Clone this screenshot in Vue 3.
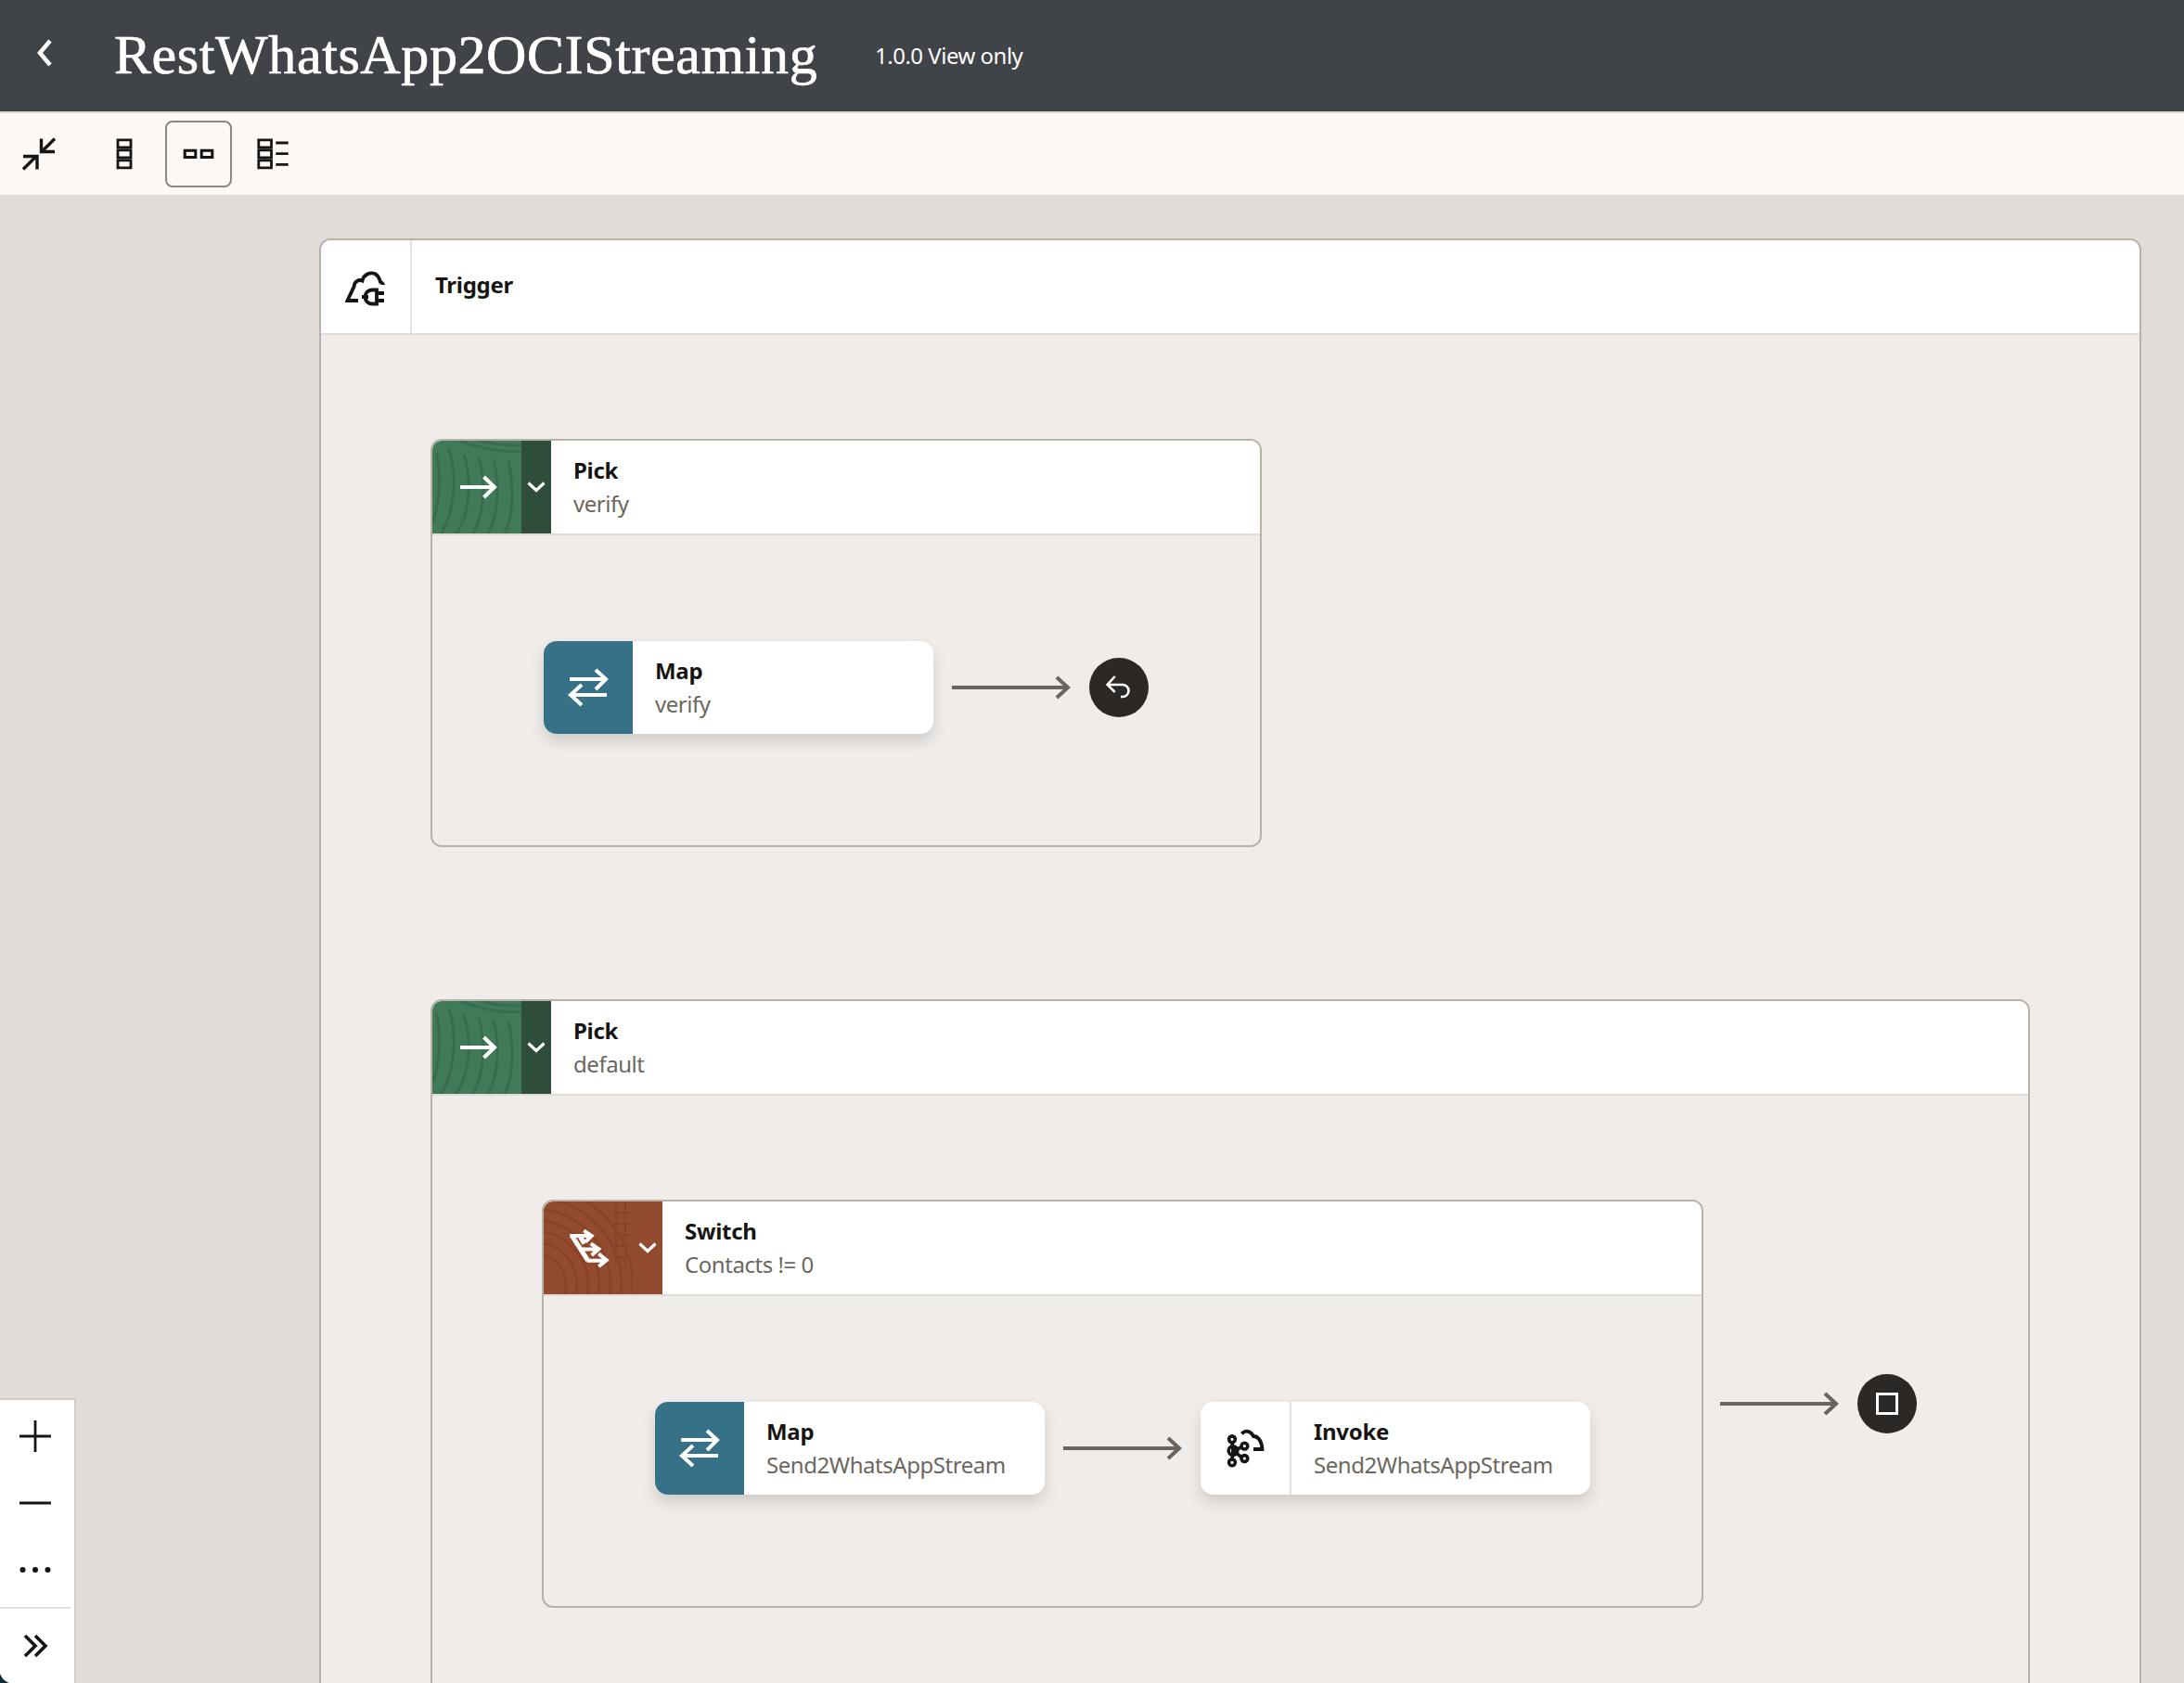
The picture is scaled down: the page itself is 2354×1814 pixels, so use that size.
<script setup>
const greenGrain = [
  'M30 0C50 8 75 12 96 12',
  'M52 0C65 4 85 5 96 5',
  'M4 12C10 35 8 70 0 88',
  'M18 8C26 35 26 70 10 100',
  'M34 15C42 40 42 75 26 100',
  'M50 18C58 45 56 78 44 100',
  'M66 20C72 45 72 80 60 100',
  'M82 22C88 48 88 80 78 100'
]
const rustGrain = [34, 46, 58, 70, 82, 94, 106]
const rustTicks = [
  'M78 0V66', 'M88 0V72', 'M74 12H96', 'M74 24H96', 'M76 36H96', 'M76 48H96', 'M76 60H96'
]
</script>

<template>
  <div class="page">
    <header class="topbar">
      <svg class="back" width="20" height="32" viewBox="0 0 20 32"><path d="M15 3 4 16l11 13" fill="none" stroke="#fff" stroke-width="4.500"/></svg>
      <h1 class="title">RestWhatsApp2OCIStreaming</h1>
      <span class="version">1.0.0 View only</span>
    </header>

    <nav class="toolbar">
      <button class="tool first">
        <svg width="36" height="36" viewBox="0 0 36 36" fill="none" stroke="#161513" stroke-width="3.400"><path d="M35 1.500 21 15.500M20.500 1.500v14H35M1 34.500l14.500-14.500M1 20.500h15v14"/></svg>
      </button>
      <button class="tool">
        <svg width="36" height="36" viewBox="0 0 36 36" fill="none" stroke="#161513" stroke-width="2.800"><path d="M11 2.800h14v8H11zM11 13.800h14v8H11zM11 24.800h14v8H11z"/></svg>
      </button>
      <button class="tool active">
        <svg width="36" height="36" viewBox="0 0 36 36" fill="none" stroke="#161513" stroke-width="3"><path d="M3.200 14.200h11.600v7.400H3.200zM21.200 14.200h11.600v7.400H21.200z"/></svg>
      </button>
      <button class="tool">
        <svg width="36" height="36" viewBox="0 0 36 36" fill="none" stroke="#161513" stroke-width="2.800"><path d="M2.800 2.800h13.700v8H2.800zM2.800 13.800h13.700v8H2.800zM2.800 24.800h13.700v8H2.800zM21.300 6h13.400M21.300 17.700h13.400M21.300 29.300h13.400"/></svg>
      </button>
    </nav>

    <main class="canvas">
      <section class="scope trigger">
        <div class="scope-head">
          <div class="trigger-icon">
            <svg width="44" height="38" viewBox="0 0 44 38" fill="none" stroke="#161513" stroke-width="3.800"><path d="M14 32H2.500L9.500 17C10 11 15 9 18.500 10.500 20 4 27 1 32 3c4 2 5 5 6 9 2 1 3 2 3 3"/><path d="M18 28h7M34 20.500h-5a7.500 7.500 0 0 0 0 15h5zM34 24h8M34 32h8"/></svg>
          </div>
          <div class="head-text"><span class="name">Trigger</span></div>
        </div>
        <div class="trigger-body">
          <section class="scope pick-verify">
            <div class="scope-head">
              <div class="grain green">
                <svg class="grain-art" width="96" height="100" viewBox="0 0 96 100" fill="none" stroke="#396c4f" stroke-width="3"><path v-for="d in greenGrain" :key="d" :d="d"/></svg>
                <svg class="grain-icon" width="48" height="48" viewBox="0 0 48 48" fill="none" stroke="#fff" stroke-width="4"><path d="M6 24h37M31.500 13 43 24 31.500 35"/></svg>
              </div>
              <div class="chev dark-green">
                <svg width="20" height="12" viewBox="0 0 20 12" fill="none" stroke="#fff" stroke-width="3.200"><path d="m1.500 1.500 8.500 8 8.500-8"/></svg>
              </div>
              <div class="head-text"><span class="name">Pick</span><span class="sub">verify</span></div>
            </div>
            <div class="scope-body row">
              <article class="node">
                <div class="node-icon teal">
                  <svg width="48" height="48" viewBox="0 0 48 48" fill="none" stroke="#fff" stroke-width="4"><path d="M4 15h39M32 5l11 10-11 11M44 32H5M17 21 5 32l12 11"/></svg>
                </div>
                <div class="head-text"><span class="name">Map</span><span class="sub">verify</span></div>
              </article>
              <svg class="link" width="128" height="26" viewBox="0 0 128 26" fill="none" stroke="#6b645e" stroke-width="4"><path d="M0 13h125M113 2l12 11-12 11"/></svg>
              <div class="end">
                <svg width="32" height="32" viewBox="0 0 32 32" fill="none" stroke="#fff" stroke-width="2.600"><path d="M11.700 4 3.600 13l8.100 8M4 13h16a6.500 6.500 0 0 1 0 13h-2"/></svg>
              </div>
            </div>
          </section>

          <section class="scope pick-default">
            <div class="scope-head">
              <div class="grain green">
                <svg class="grain-art" width="96" height="100" viewBox="0 0 96 100" fill="none" stroke="#396c4f" stroke-width="3"><path v-for="d in greenGrain" :key="d" :d="d"/></svg>
                <svg class="grain-icon" width="48" height="48" viewBox="0 0 48 48" fill="none" stroke="#fff" stroke-width="4"><path d="M6 24h37M31.500 13 43 24 31.500 35"/></svg>
              </div>
              <div class="chev dark-green">
                <svg width="20" height="12" viewBox="0 0 20 12" fill="none" stroke="#fff" stroke-width="3.200"><path d="m1.500 1.500 8.500 8 8.500-8"/></svg>
              </div>
              <div class="head-text"><span class="name">Pick</span><span class="sub">default</span></div>
            </div>
            <div class="default-body">
              <section class="scope switch">
                <div class="scope-head">
                  <div class="grain rust">
                    <svg class="grain-art" width="96" height="100" viewBox="0 0 96 100" fill="none" stroke="#85432a" stroke-width="2.600">
                      <circle v-for="r in rustGrain" :key="r" cx="-10" cy="90" :r="r"/>
                      <path v-for="d in rustTicks" :key="d" :d="d" stroke-width="2"/>
                    </svg>
                    <svg class="grain-icon" width="48" height="48" viewBox="0 0 48 48" fill="none" stroke="#fff" stroke-width="4"><path d="M4.300 11H26M19.300 5.300 27.700 11 21 17.700M16 25.500h18.300M26.700 19.300l8.600 6L27.700 32M22.700 37.700h20M35.300 30.300l8.400 7-8.400 6.700"/><path d="M6.500 11l17.200 26.700M15.300 12 20 19.300" stroke-width="5"/></svg>
                  </div>
                  <div class="chev rust-flat">
                    <svg width="20" height="12" viewBox="0 0 20 12" fill="none" stroke="#fff" stroke-width="3.200"><path d="m1.500 1.500 8.500 8 8.500-8"/></svg>
                  </div>
                  <div class="head-text"><span class="name">Switch</span><span class="sub">Contacts != 0</span></div>
                </div>
                <div class="scope-body row">
                  <article class="node">
                    <div class="node-icon teal">
                      <svg width="48" height="48" viewBox="0 0 48 48" fill="none" stroke="#fff" stroke-width="4"><path d="M4 15h39M32 5l11 10-11 11M44 32H5M17 21 5 32l12 11"/></svg>
                    </div>
                    <div class="head-text"><span class="name">Map</span><span class="sub">Send2WhatsAppStream</span></div>
                  </article>
                  <svg class="link" width="128" height="26" viewBox="0 0 128 26" fill="none" stroke="#6b645e" stroke-width="4"><path d="M0 13h125M113 2l12 11-12 11"/></svg>
                  <article class="node">
                    <div class="node-icon plain">
                      <svg width="48" height="48" viewBox="0 0 48 48" fill="none" stroke="#161513" stroke-width="3.600"><path d="M20.500 8.500C24 4 30 5 33 11c5 0 9 5 9.500 14H33" stroke-width="3.800"/><path d="M10 17.500 11 26.500M10 36 11 26.500M20 23l-9 3.500M20 33.500l-9-7"/><circle cx="10" cy="14.300" r="3.400"/><circle cx="10" cy="39.300" r="3.400"/><circle cx="23.400" cy="21.600" r="3.400"/><circle cx="23.400" cy="35" r="3.400"/><circle cx="11" cy="26.600" r="4.800"/></svg>
                    </div>
                    <div class="head-text"><span class="name">Invoke</span><span class="sub">Send2WhatsAppStream</span></div>
                  </article>
                </div>
              </section>
              <svg class="link after-switch" width="128" height="26" viewBox="0 0 128 26" fill="none" stroke="#6b645e" stroke-width="4"><path d="M0 13h125M113 2l12 11-12 11"/></svg>
              <div class="end">
                <span class="stop"></span>
              </div>
            </div>
          </section>
        </div>
      </section>

      <aside class="zoom-panel">
        <button class="zoom-btn">
          <svg width="36" height="36" viewBox="0 0 36 36" fill="none" stroke="#161513" stroke-width="2.800"><path d="M1 18h34M18 1v34"/></svg>
        </button>
        <button class="zoom-btn">
          <svg width="36" height="36" viewBox="0 0 36 36" fill="none" stroke="#161513" stroke-width="2.800"><path d="M1 18h34"/></svg>
        </button>
        <button class="zoom-btn">
          <svg width="36" height="36" viewBox="0 0 36 36" fill="#161513"><circle cx="4.500" cy="18" r="3"/><circle cx="18" cy="18" r="3"/><circle cx="31.500" cy="18" r="3"/></svg>
        </button>
        <div class="zoom-rule"></div>
        <button class="zoom-btn expand">
          <svg width="28" height="28" viewBox="0 0 28 28" fill="none" stroke="#161513" stroke-width="3.600"><path d="m3 3 11 11L3 25M14 3l11 11-11 11"/></svg>
        </button>
        <svg class="corner" width="10" height="10" viewBox="0 0 10 10"><path d="M0 0c2 5 5 8 10 10H0z" fill="#0b2b3b"/></svg>
      </aside>
    </main>
  </div>
</template>

<style scoped>
.page {
  width: 2354px;
  height: 1814px;
  display: flex;
  flex-direction: column;
  overflow: hidden;
  font-family: "Noto Sans", "Open Sans", sans-serif;
  color: #161513;
}
.topbar {
  height: 120px;
  flex: none;
  display: flex;
  align-items: center;
  background: #404348;
  border-bottom: 2px solid #ddd8cc;
  color: #fff;
}
.back { margin: -6px 0 0 39px; flex: none; }
.title {
  margin: -2px 0 0 64px;
  width: 820px;
  flex: none;
  font-family: "Liberation Serif", serif;
  font-size: 60px;
  font-weight: 400;
  line-height: 1.2;
  letter-spacing: 0.6px;
  -webkit-text-stroke: 0.7px #fff;
  white-space: nowrap;
}
.version { margin-top: -2px; font-size: 24px; letter-spacing: -0.5px; white-space: nowrap; }

.toolbar {
  height: 88px;
  flex: none;
  display: flex;
  align-items: center;
  gap: 8px;
  padding-left: 6px;
  background: #fcf8f5;
}
.tool {
  width: 72px;
  height: 72px;
  padding: 0;
  display: flex;
  align-items: center;
  justify-content: center;
  border: 2px solid transparent;
  border-radius: 8px;
  background: transparent;
}
.tool.first { margin-right: 12px; }
.tool.active { border-color: #8a8886; }

.canvas {
  position: relative;
  flex: 1;
  min-height: 0;
  overflow: hidden;
  padding: 47px 0 0 344px;
  background: #e0dcd7;
}
.scope {
  box-sizing: border-box;
  border: 2px solid #b8b2ab;
  border-radius: 12px;
  background: #f0ece9;
}
.scope-head {
  height: 100px;
  display: flex;
  background: #fff;
  border-bottom: 2px solid #dfdbd7;
  border-radius: 10px 10px 0 0;
  overflow: hidden;
}
.trigger { width: 1964px; height: 1700px; }
.trigger-icon {
  width: 96px;
  flex: none;
  display: flex;
  align-items: center;
  justify-content: center;
  border-right: 2px solid #e4e1dd;
}
.trigger .trigger-icon svg { margin-top: 4px; }
.trigger-body {
  display: flex;
  flex-direction: column;
  align-items: flex-start;
  gap: 164px;
  padding: 112px 0 0 118px;
}
.trigger > .scope-head .head-text { padding-left: 25px; }
.trigger > .scope-head .name { margin-bottom: 4px; }
.pick-verify { width: 896px; }
.pick-default { width: 1724px; height: 1000px; }
.grain { position: relative; width: 96px; flex: none; overflow: hidden; }
.grain-art { position: absolute; left: 0; top: 0; }
.grain-icon { position: absolute; left: 24px; top: 26px; }
.green { background: #417a59; }
.rust { background: #934b2f; }
.chev {
  width: 32px;
  flex: none;
  display: flex;
  align-items: center;
  justify-content: center;
}
.dark-green { background: #2e4d3a; }
.rust-flat { background: #934b2f; }
.head-text {
  display: flex;
  flex-direction: column;
  justify-content: center;
  padding-left: 24px;
  white-space: nowrap;
}
.name { font-size: 24px; font-weight: 700; letter-spacing: -0.3px; line-height: 36px; color: #161513; }
.sub { font-size: 24px; line-height: 36px; color: #6b6660; letter-spacing: -0.45px; }

.row {
  display: flex;
  align-items: center;
  padding: 114px 0 120px 120px;
}
.node {
  box-sizing: border-box;
  width: 420px;
  height: 100px;
  flex: none;
  display: flex;
  border-radius: 14px;
  background: #fff;
  box-shadow: 0 8px 16px rgba(0, 0, 0, 0.14);
  overflow: hidden;
}
.node-icon {
  width: 96px;
  flex: none;
  display: flex;
  align-items: center;
  justify-content: center;
}
.teal { background: #377187; }
.plain { border-right: 2px solid #e4e1dd; }
.link { flex: none; margin: 0 20px; }
.end {
  width: 64px;
  height: 64px;
  flex: none;
  display: flex;
  align-items: center;
  justify-content: center;
  border-radius: 50%;
  background: #2c2825;
}
.stop {
  box-sizing: border-box;
  width: 24px;
  height: 24px;
  border: 3px solid #fff;
}
.default-body {
  display: flex;
  align-items: center;
  padding: 112px 0 0 118px;
}
.switch { width: 1252px; flex: none; }
.after-switch { margin: 0 20px 0 18px; }

.zoom-panel {
  position: absolute;
  left: 0;
  bottom: 0;
  box-sizing: border-box;
  width: 82px;
  height: 307px;
  padding-top: 3px;
  display: flex;
  flex-direction: column;
  background: #fff;
  border-top: 2px solid #cfcbc5;
  border-right: 2px solid #cfcbc5;
}
.zoom-btn {
  width: 76px;
  height: 72px;
  flex: none;
  padding: 0;
  display: flex;
  align-items: center;
  justify-content: center;
  border: 0;
  background: transparent;
}
.zoom-rule { height: 2px; width: 76px; flex: none; margin-top: 4px; background: #e4e1dd; }
.expand { height: 80px; }
.corner { position: absolute; left: 0; bottom: 0; }
</style>

<style>
html, body { margin: 0; overflow: hidden; }
</style>
